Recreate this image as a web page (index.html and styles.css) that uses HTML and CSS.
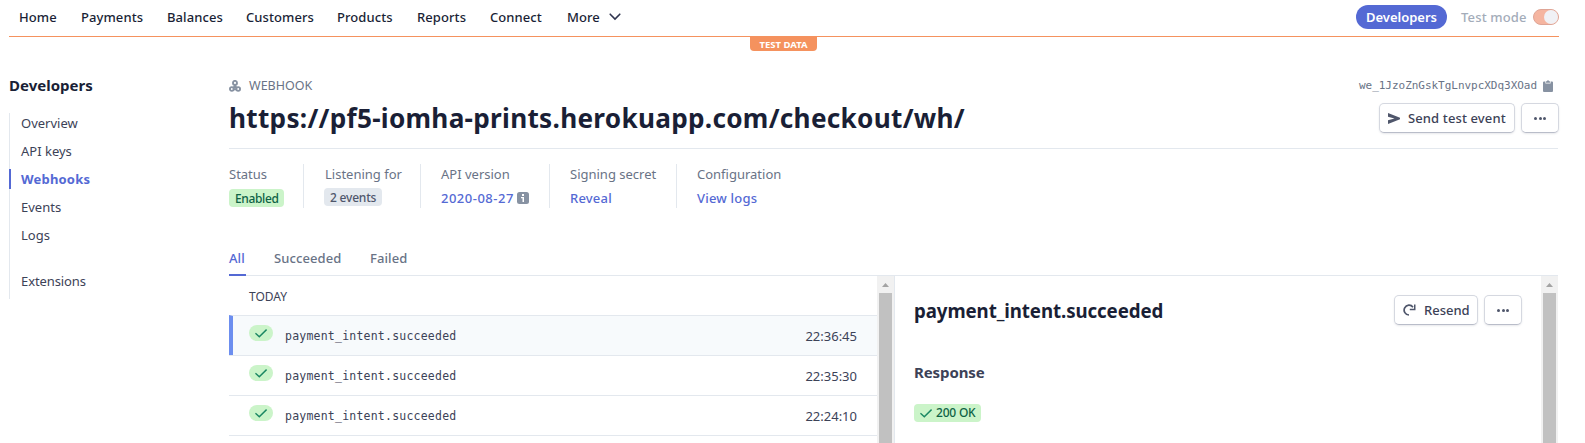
FILE: index.html
```html
<!DOCTYPE html>
<html lang="en">
<head>
<meta charset="utf-8">
<title>Webhook</title>
<link rel="stylesheet" href="styles.css">
</head>
<body>
<header class="topbar">
  <nav class="nav">
    <a class="n-home">Home</a><a class="n-pay">Payments</a><a class="n-bal">Balances</a><a class="n-cus">Customers</a><a class="n-pro">Products</a><a class="n-rep">Reports</a><a class="n-con">Connect</a><a class="n-more">More</a>
    <svg class="chevron" width="12" height="8" viewBox="0 0 12 8"><path d="M1.200 1.200 6 6l4.800-4.800" fill="none" stroke="#30354f" stroke-width="1.600" stroke-linecap="round"/></svg>
  </nav>
  <div class="mode">
    <a class="pill-dev">Developers</a>
    <span class="mode-label">Test mode</span>
    <span class="toggle"><i></i></span>
  </div>
  <span class="test-badge">TEST DATA</span>
</header>
<div class="page">
  <aside class="sidebar">
    <h2>Developers</h2>
    <ul>
      <li>Overview</li>
      <li>API keys</li>
      <li class="active">Webhooks</li>
      <li>Events</li>
      <li>Logs</li>
      <li class="ext">Extensions</li>
    </ul>
  </aside>
  <main class="main">
    <div class="eyebrow">
      <svg width="12" height="12" viewBox="0 0 12 12" fill="none" stroke="#8792a2" stroke-width="1.900"><path d="M6 3v3.500M3 9 6 6l3 3M3.500 9.200h5"/><circle cx="6" cy="2.900" r="2" fill="#fff"/><circle cx="2.800" cy="9" r="1.850" fill="#fff"/><circle cx="9.200" cy="9" r="1.850" fill="#fff"/></svg>
      <span class="kind">WEBHOOK</span>
      <span class="id">we_1JzoZnGskTgLnvpcXDq3XOad</span>
      <svg class="clip" width="10" height="12" viewBox="0 0 10 12"><path fill="#8792a2" d="M1 1.500h1.400v2h5.200v-2H9a1 1 0 0 1 1 1V11a1 1 0 0 1-1 1H1a1 1 0 0 1-1-1V2.500a1 1 0 0 1 1-1z"/><path fill="#8792a2" d="M3 1.200h1a1 1 0 0 1 2 0h1v1.500H3z"/></svg>
    </div>
    <div class="title-row">
      <h1>https://pf5-iomha-prints.herokuapp.com/checkout/wh/</h1>
      <button class="btn send"><svg width="12" height="11" viewBox="0 0 12 11"><path fill="#4f566b" d="M0 0 12 4.700v1.600L0 11V7.200L6.500 5.500 0 3.800z"/></svg><span>Send test event</span></button>
      <button class="btn more"><i></i><i></i><i></i></button>
    </div>
    <div class="stats">
      <div class="stat st1"><span class="label">Status</span><span class="tag green">Enabled</span></div>
      <div class="stat st2"><span class="label">Listening for</span><span class="tag grey">2 events</span></div>
      <div class="stat st3"><span class="label">API version</span><span class="link date">2020-08-27<svg width="12" height="12" viewBox="0 0 12 12"><rect width="12" height="12" rx="2.500" fill="#8792a2"/><path fill="#fff" d="M5 2h2v2H5zM4 5h3v5H5.500V6.200H4z"/></svg></span></div>
      <div class="stat st4"><span class="label">Signing secret</span><span class="link">Reveal</span></div>
      <div class="stat st5"><span class="label">Configuration</span><span class="link">View logs</span></div>
    </div>
    <div class="tabs"><span class="tab on">All</span><span class="tab t2">Succeeded</span><span class="tab">Failed</span></div>
    <div class="panes">
      <section class="list">
        <div class="day">TODAY</div>
        <div class="row selected"><span class="ok"><svg width="12" height="9" viewBox="0 0 12 9"><path d="M.4 4.200 4.300 7.800 11.600.6"/></svg></span><code>payment_intent.succeeded</code><time>22:36:45</time></div>
        <div class="row"><span class="ok"><svg width="12" height="9" viewBox="0 0 12 9"><path d="M.4 4.200 4.300 7.800 11.600.6"/></svg></span><code>payment_intent.succeeded</code><time>22:35:30</time></div>
        <div class="row"><span class="ok"><svg width="12" height="9" viewBox="0 0 12 9"><path d="M.4 4.200 4.300 7.800 11.600.6"/></svg></span><code>payment_intent.succeeded</code><time>22:24:10</time></div>
        <div class="row-edge"></div>
      </section>
      <div class="scroll"><svg width="7" height="4" viewBox="0 0 7 4"><path fill="#a3a3a3" d="M3.500 0 7 4H0z"/></svg><b></b></div>
      <section class="detail">
        <div class="detail-head">
          <h3>payment_intent.succeeded</h3>
          <button class="btn resend"><svg width="13" height="12" viewBox="0 0 13 12"><path d="M6 11A4.900 4.900 0 1 1 10 3.200" fill="none" stroke="#4f566b" stroke-width="1.700"/><path d="M12.500.5v5.700H6.800V4.700H11V.5z" fill="#4f566b"/></svg><span>Resend</span></button>
          <button class="btn more"><i></i><i></i><i></i></button>
        </div>
        <h4>Response</h4>
        <span class="tag green code"><svg width="12" height="9" viewBox="0 0 12 9"><path d="M.4 4.200 4.300 7.800 11.600.6"/></svg><span>200 OK</span></span>
      </section>
      <div class="scroll"><svg width="7" height="4" viewBox="0 0 7 4"><path fill="#a3a3a3" d="M3.500 0 7 4H0z"/></svg><b></b></div>
    </div>
  </main>
</div>
</body>
</html>
```
FILE: styles.css
```css
* { box-sizing: border-box; }
body { margin: 0; background: #fff; color: #3c4257; font: 400 13px/20px "Noto Sans", "Open Sans", sans-serif; }
h1, h2, h3, h4, ul { margin: 0; padding: 0; list-style: none; }
svg { display: block; flex: none; }
.topbar { position: relative; display: flex; justify-content: space-between; height: 37px; margin: 0 26px 0 9px; border-bottom: 1px solid #f5925e; }
.nav { display: flex; align-items: center; height: 34px; padding-left: 10px; color: #1a1f36; font-weight: 500; letter-spacing: .08px; }
.nav a { white-space: nowrap; }
.n-home { width: 62px; } .n-pay { width: 86px; } .n-bal { width: 79px; } .n-cus { width: 91px; }
.n-pro { width: 80px; } .n-rep { width: 73px; } .n-con { width: 77px; } .n-more { width: 42px; }
.mode { display: flex; align-items: center; height: 34px; }
.pill-dev { width: 91px; height: 24px; border-radius: 12px; background: #5469d4; color: #fff; font-weight: 600; line-height: 24px; text-align: center; }
.mode-label { width: 72px; margin-left: 14px; color: #a3acb9; font-weight: 500; letter-spacing: .15px; white-space: nowrap; }
.toggle { display: flex; justify-content: flex-end; width: 26px; height: 16px; border-radius: 8px; border: 1px solid #dfa596; background: #f5b5a0; }
.toggle i { width: 14px; height: 14px; border-radius: 50%; background: #f0f1f5; }
.test-badge { position: absolute; left: 741px; top: 36px; width: 67px; height: 15px; border-radius: 0 0 4px 4px; background: #f5925e; color: #fff; font-weight: 700; font-size: 9.500px; line-height: 17px; text-align: center; }
.page { display: flex; margin: 0 26px 0 9px; }
.sidebar { width: 220px; padding-top: 37px; }
.sidebar h2 { color: #1a1f36; font-size: 15px; line-height: 22px; font-weight: 700; }
.sidebar ul { margin-top: 17px; height: 186px; border-left: 1px solid #e3e8ee; }
.sidebar li { height: 20px; margin-bottom: 8px; padding-left: 11px; }
.sidebar .active { margin-left: -1px; border-left: 2px solid #5469d4; padding-left: 10px; color: #5469d4; font-weight: 700; letter-spacing: .2px; }
.sidebar .ext { margin-top: 26px; letter-spacing: -.1px; }
.main { width: 1330px; margin-right: -1px; padding-top: 38px; }
.eyebrow { display: flex; align-items: center; height: 22px; color: #697386; }
.kind { margin-left: 8px; font-size: 12.500px; }
.id { margin-left: auto; font: 11px/20px "DejaVu Sans Mono", monospace; letter-spacing: -.03px; }
.clip { margin: 0 6px 0 6px; }
.title-row { display: flex; align-items: flex-start; height: 52px; margin-right: 1px; padding-top: 6px; border-bottom: 1px solid #e3e8ee; }
h1 { flex: 1; margin-top: -1px; color: #1a1f36; font-size: 26.200px; line-height: 32px; font-weight: 700; letter-spacing: .27px; white-space: nowrap; }
.btn { display: flex; align-items: center; height: 30px; padding: 0 8px; border: 1px solid #d5d8e0; border-bottom-color: #b9bdc9; border-radius: 5px; background: #fff; box-shadow: 0 1px 2px rgba(60,66,87,.12); color: #3c4257; font: 500 13px/20px "Noto Sans", sans-serif; letter-spacing: .12px; white-space: nowrap; }
.send { width: 136px; gap: 8px; }
.more { width: 38px; margin-left: 6px; justify-content: center; gap: 1.500px; padding: 0; }
.title-row .more { margin-right: -1px; }
.more i { width: 3px; height: 3px; border-radius: 50%; background: #4f566b; }
.stats { display: flex; height: 44px; margin-top: 15px; }
.stat { display: flex; flex-direction: column; align-items: flex-start; padding-left: 21px; border-left: 1px solid #e3e8ee; white-space: nowrap; }
.st1 { width: 74px; padding-left: 0; border: 0; } .st2 { width: 117px; } .st3 { width: 129px; } .st4 { width: 127px; } .st5 { width: 140px; }
.st3, .st4, .st5 { padding-left: 20px; }
.label { color: #697386; }
.link { margin-top: 4px; color: #5469d4; font-weight: 500; letter-spacing: .2px; }
.date { display: flex; align-items: center; letter-spacing: .5px; }
.date svg { margin-left: 3px; }
.tag { display: flex; align-items: center; height: 18px; border-radius: 4px; padding: 0 6px; font-size: 12px; font-weight: 500; white-space: nowrap; }
.green { margin-top: 5px; background: #cbf4c9; color: #0e6245; }
.st1 .tag { width: 55px; letter-spacing: -.35px; line-height: 18px; padding-top: 1px; }
.grey { margin-top: 4px; background: #e3e8ee; color: #4f566b; }
.st2 .tag { width: 58px; margin-left: -1px; letter-spacing: -.2px; padding-top: 2px; }
.tabs { display: flex; height: 36px; margin-top: 32px; margin-right: 1px; color: #697386; font-weight: 500; letter-spacing: .1px; border-bottom: 1px solid #e3e8ee; }
.tab { height: 36px; padding-top: 8px; }
.on { width: 17px; margin-right: 28px; color: #5469d4; border-bottom: 2px solid #5469d4; }
.t2 { width: 96px; }
.panes { display: flex; height: 167px; }
.list { width: 648px; }
.day { height: 39px; padding: 11px 20px 0; font-size: 12px; }
.row { display: flex; height: 40px; padding: 9px 20px 0 20px; border-top: 1px solid #e3e8ee; }
.row-edge { height: 8px; border-top: 1px solid #e3e8ee; }
.selected { padding-left: 16px; border-left: 4px solid #6c8eef; background: #f7fafc; }
.ok { display: flex; align-items: center; justify-content: center; width: 24px; height: 16px; border-radius: 8px; background: #cbf4c9; }
.ok path, .code path { fill: none; stroke: #1a8763; stroke-width: 1.500; }
.row code { margin-left: 12px; font: 11.500px/22px "DejaVu Sans Mono", monospace; letter-spacing: .22px; }
.row time { margin-left: auto; line-height: 22px; }
.scroll { display: flex; flex-direction: column; align-items: center; width: 17px; height: 167px; padding-top: 7px; background: #f1f1f1; }
.scroll b { width: 13px; flex: 1; margin-top: 6px; background: #c1c1c1; }
.detail { width: 647px; padding: 19px 19px 0 19px; border-left: 1px solid #e3e8ee; }
.detail-head { display: flex; height: 30px; }
.detail h3 { flex: 1; margin-top: 2px; color: #1a1f36; font-size: 18.700px; line-height: 28px; font-weight: 700; letter-spacing: -.09px; }
.resend { width: 84px; gap: 8px; letter-spacing: 0; }
.detail h4 { margin: 37px 0 22px; font-size: 15px; line-height: 20px; font-weight: 700; letter-spacing: -.1px; }
.code { width: 67px; margin: 0; gap: 4px; letter-spacing: -.2px; }
```
